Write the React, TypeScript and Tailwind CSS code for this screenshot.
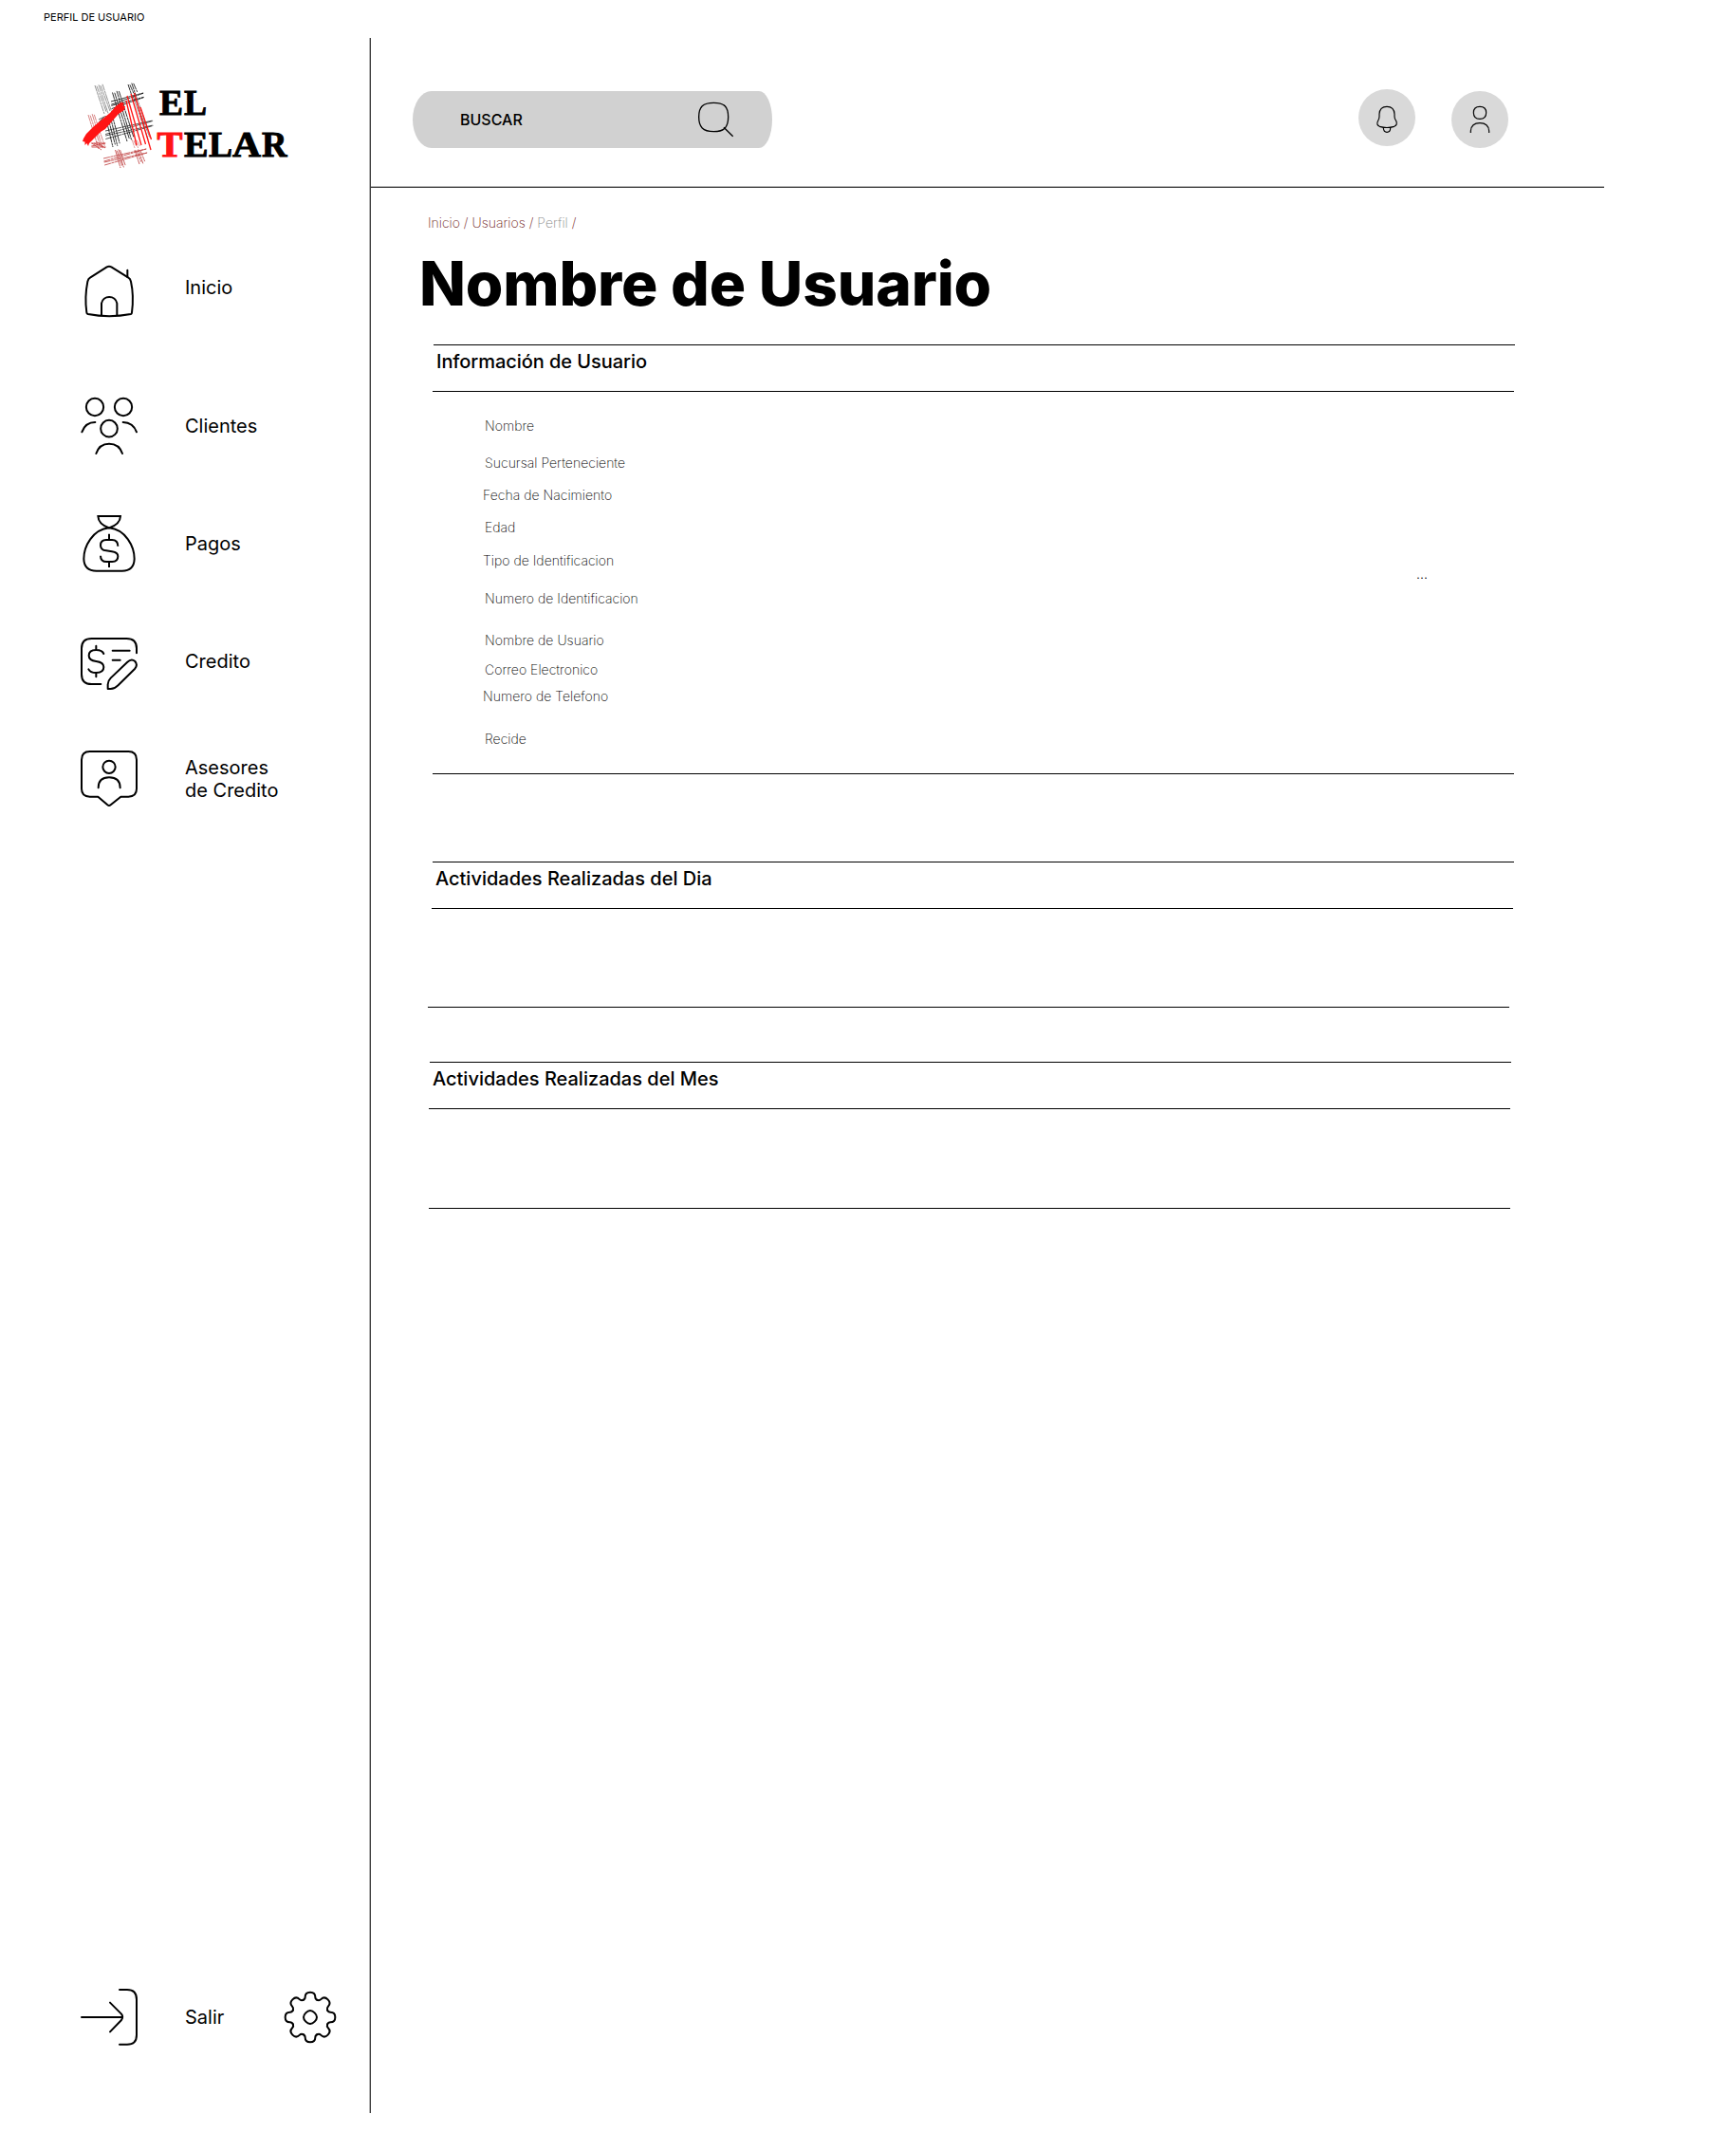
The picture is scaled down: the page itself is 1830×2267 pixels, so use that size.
import type { ReactNode } from "react";

const range = (n: number) => Array.from({ length: n }, (_, i) => i);

type BundleProps = {
  from: [number, number];
  to: [number, number];
  step: [number, number];
  count: number;
  color: string;
  width?: number;
};

/* A group of parallel threads of the woven logo. */
function Bundle({ from, to, step, count, color, width = 0.85 }: BundleProps) {
  return (
    <g stroke={color} strokeWidth={width} strokeDasharray="7 0.5 3 0.4">
      {range(count).map((i) => {
        const j = i % 2 === 0 ? 0 : 1;
        return (
          <line
            key={i}
            x1={from[0] + step[0] * i}
            y1={from[1] + step[1] * i + j}
            x2={to[0] + step[0] * i}
            y2={to[1] + step[1] * i - j * 2}
          />
        );
      })}
    </g>
  );
}

function Logo() {
  return (
    <svg className="ml-[80px] block h-[100px] w-[230px]" viewBox="80 80 230 100" fill="none">
      <Bundle from={[100, 90]} to={[110, 120]} step={[2, -0.3]} count={5} color="#666" width={0.7} />
      <Bundle from={[111, 122]} to={[119, 155]} step={[2.4, -0.6]} count={4} color="#111" />
      <Bundle from={[118.5, 97.5]} to={[134, 149]} step={[2.3, -0.8]} count={4} color="#111" />
      <Bundle from={[135, 89]} to={[139, 101]} step={[1.9, -0.7]} count={4} color="#111" />
      <Bundle from={[140, 101]} to={[156, 147]} step={[1.6, -0.4]} count={3} color="#777" />
      <Bundle from={[117, 107]} to={[151, 98]} step={[0.2, 2.2]} count={4} color="#111" />
      <Bundle from={[111, 138]} to={[161, 127]} step={[0.1, 2.5]} count={4} color="#111" width={0.7} />
      <Bundle from={[93, 121]} to={[104, 157]} step={[2.1, -0.4]} count={4} color="#d07070" />
      <Bundle from={[96, 151]} to={[111, 151]} step={[0.3, 2]} count={3} color="#c83c3c" />
      <Bundle from={[97, 151]} to={[107, 158]} step={[2, -1]} count={3} color="#c83c3c" />
      <Bundle from={[104, 126]} to={[110, 123]} step={[0.3, 1.7]} count={3} color="#444" />
      <Bundle from={[109, 167]} to={[154, 157]} step={[0.4, 2]} count={4} color="#c04646" />
      <Bundle from={[121.5, 158]} to={[127, 177]} step={[1.7, -0.3]} count={4} color="#c04646" />
      <Bundle from={[142, 158]} to={[147, 173]} step={[1.9, -0.3]} count={4} color="#c04646" />
      <Bundle from={[139, 147]} to={[142, 156]} step={[1.8, 0]} count={4} color="#d99090" />
      <g stroke="#ff1414" strokeWidth="1.3">
        <path d="M133 106L144 153M134 101L149 153M138 99L153.500 152M141.500 98L159 158M148 113L159.500 147" />
      </g>
      <path
        d="M128 107.500L131 109L129.500 111.500L132 112L131 116L125 120L118 128L111 136L106 139L99 146L94 151L93 154L91.500 151L89.500 153L89.500 149.500L87 149L88 146L91 141L98 134L105 128L111 123L116 119L122 112Z"
        fill="#ff1414"
      />
      <g
        fontFamily="'Liberation Serif', serif"
        fontWeight="700"
        fontSize="38"
        fill="#000"
        stroke="#000"
        strokeWidth="1"
      >
        <text x="168" y="120.500" textLength="25" lengthAdjust="spacingAndGlyphs">E</text>
        <text x="194" y="120.500" textLength="24" lengthAdjust="spacingAndGlyphs">L</text>
        <text x="165.500" y="164.500" textLength="27" lengthAdjust="spacingAndGlyphs" fill="#ff1414" stroke="#ff1414">T</text>
        <text x="194" y="164.500" textLength="25.500" lengthAdjust="spacingAndGlyphs">E</text>
        <text x="220" y="164.500" textLength="25" lengthAdjust="spacingAndGlyphs">L</text>
        <text x="245" y="164.500" textLength="30" lengthAdjust="spacingAndGlyphs">A</text>
        <text x="276" y="164.500" textLength="26.500" lengthAdjust="spacingAndGlyphs">R</text>
      </g>
    </svg>
  );
}

/* Outline icons are drawn on a grid three times finer than the page. */
const line = {
  fill: "none",
  stroke: "#000",
  strokeWidth: 6,
  strokeLinecap: "round",
  strokeLinejoin: "round",
} as const;

const HomeIcon = (
  <svg className="h-[60px] w-[62px] shrink-0" viewBox="72 51 186 180" {...line}>
    <path d="M165 62Q162 62 158 64L105 98Q99 101 97 110Q87 160 94 208Q94 212 98 213Q165 226 234 213Q237 212 237 208Q244 155 234 110Q232 101 226 98L172 64Q168 62 165 62Z" />
    <path d="M141 216V179a25 25 0 0 1 49 0V216M223 74V96" />
  </svg>
);

const ClientsIcon = (
  <svg className="h-[64px] w-[62px] shrink-0" viewBox="72 471 186 192" {...line}>
    <circle cx="120" cy="507" r="27.500" />
    <circle cx="210" cy="507" r="27.500" />
    <circle cx="165" cy="575" r="26.500" />
    <path d="M121 555Q90 555 79 586M209 555Q241 556 252 586M124 654Q134 623 165 623Q197 623 207 654" />
  </svg>
);

const MoneyBagIcon = (
  <svg className="h-[63px] w-[62px] shrink-0" viewBox="72 63 186 189" {...line} strokeLinecap="butt" strokeLinejoin="miter">
    <path d="M130 72H201C200 92 184 103 165 109C147 103 131 92 130 72Z" />
    <path d="M165 109C113 114 85 168 85 207Q86 245 125 245H206Q244 245 245 207C245 168 217 114 165 109Z" />
    <path d="M165 128V147M165 216V234M193 167Q193 147 174 147H156Q138 147 138 164Q138 179 156 181L174 184Q193 187 193 199Q193 216 175 216H157Q138 216 138 197" />
  </svg>
);

const CreditIcon = (
  <svg className="h-[57px] w-[62px] shrink-0" viewBox="72 453 186 171" {...line}>
    <path d="M252 505V490Q252 459 220 459H110Q78 459 78 490V572Q78 603 110 603H139" />
    <path d="M124 482V495M124 568V580M148 507Q143 495 124 495Q101 495 101 513Q101 528 124 531Q148 534 148 549Q148 567 124 567Q105 567 100 556M176 497H230M176 527H200" />
    <path d="M161 618V604Q161 593 170 584L223 533Q236 521 247 531Q257 543 246 555L192 608Q183 618 170 618Z" />
  </svg>
);

const AdvisorIcon = (
  <svg className="h-[61px] w-[62px] shrink-0" viewBox="72 810 186 183" {...line}>
    <path d="M104 816H226Q252 816 252 842V934Q252 959 226 959H202L170 985Q165 989 160 985L130 959H104Q78 959 78 934V842Q78 816 104 816Z" />
    <circle cx="165" cy="865" r="20" />
    <path d="M131 931Q131 898 165 898Q200 898 200 931" />
  </svg>
);

const ExitIcon = (
  <svg className="h-[62px] w-[62px] shrink-0" viewBox="72 75 186 186" {...line}>
    <path d="M198 81H222Q252 81 252 112V224Q252 254 222 254H198M78 168H206M168 122L204 158Q211 167 204 177L168 214" />
  </svg>
);

const GearIcon = (
  <svg className="h-[58px] w-[58px] shrink-0" viewBox="714 81 174 174" {...line}>
    {range(8).map((i) => (
      <path
        key={i}
        d="M778 114Q785 111 785 104Q785 89 801 89Q817 89 817 104Q817 111 824 114"
        transform={`rotate(${i * 45} 801 168)`}
      />
    ))}
    <path d="M801 147Q808 147 815 154Q822 161 822 168Q822 175 815 182Q808 189 801 189Q794 189 787 182Q780 175 780 168Q780 161 787 154Q794 147 801 147Z" />
  </svg>
);

type NavItemProps = { icon: ReactNode; label: ReactNode; row: string; text: string };

function NavItem({ icon, label, row, text }: NavItemProps) {
  return (
    <a className={`flex items-start pl-[84px] ${row}`}>
      {icon}
      <span className={`ml-[49px] text-[20px] leading-[24px] ${text}`}>{label}</span>
    </a>
  );
}

const fields: { label: string; row: string }[] = [
  { label: "Nombre", row: "h-[39px] pl-[55px]" },
  { label: "Sucursal Perteneciente", row: "h-[34px] pl-[55px]" },
  { label: "Fecha de Nacimiento", row: "h-[34px] pl-[53px]" },
  { label: "Edad", row: "h-[35px] pl-[55px]" },
  { label: "Tipo de Identificacion", row: "h-[40px] pl-[53px]" },
  { label: "Numero de Identificacion", row: "h-[44px] pl-[55px]" },
  { label: "Nombre de Usuario", row: "h-[31px] pl-[55px]" },
  { label: "Correo Electronico", row: "h-[28px] pl-[55px]" },
  { label: "Numero de Telefono", row: "h-[45px] pl-[53px]" },
  { label: "Recide", row: "h-[17px] pl-[55px]" },
];

type SectionProps = {
  title: string;
  heading?: string;
  className: string;
  body: string;
  end: string;
  children?: ReactNode;
};

function Section({ title, heading = "", className, body, end, children }: SectionProps) {
  return (
    <section className={`w-[1140px] ${className}`}>
      <h2
        className={`ml-px h-[49px] w-[1140px] border-t border-black pt-[5px] pl-[3px] text-[20px] leading-[24px] font-medium ${heading}`}
      >
        {title}
      </h2>
      <div className={`border-t border-black ${body}`}>{children}</div>
      <div className={`h-px w-[1140px] bg-black ${end}`} />
    </section>
  );
}

export default function App() {
  return (
    <div className="h-[2267px] w-[1830px] overflow-hidden bg-white font-['Inter',sans-serif] text-black">
      <div className="h-[40px] pt-[11px] pl-[46px] text-[11px] leading-[14px]">PERFIL DE USUARIO</div>
      <div className="flex h-[2187px]">
        <aside className="flex w-[390px] shrink-0 flex-col border-r border-[#b5b5b5] pt-[40px]">
          <Logo />
          <nav className="flex flex-col">
            <NavItem icon={HomeIcon} label="Inicio" row="mt-[97px] h-[60px]" text="pt-[14px]" />
            <NavItem icon={ClientsIcon} label="Clientes" row="mt-[80px] h-[64px]" text="pt-[20px]" />
            <NavItem icon={MoneyBagIcon} label="Pagos" row="mt-[60px] h-[63px]" text="pt-[20px]" />
            <NavItem icon={CreditIcon} label="Credito" row="mt-[67px] h-[57px]" text="pt-[14px]" />
            <NavItem
              icon={AdvisorIcon}
              label={<>Asesores<br />de Credito</>}
              row="mt-[62px] h-[61px]"
              text="pt-[7px]"
            />
          </nav>
          <div className="mt-auto mb-[70px] flex items-start">
            <NavItem icon={ExitIcon} label="Salir" row="h-[62px] w-[298px]" text="pt-[19px]" />
            <div className="pt-[2px]">{GearIcon}</div>
          </div>
        </aside>

        <main className="w-[1301px] border-l border-[#3a3a3a]">
          <header className="flex h-[157px] items-start border-b border-[#b5b5b5] pl-[44px]">
            <div className="mt-[56px] flex h-[60px] w-[379px] items-start bg-[#d1d1d1] [border-radius:20px_14px_14px_20px/30px]">
              <span className="mt-[20px] ml-[50px] w-[249px] text-[16px] leading-[20px] font-medium">BUSCAR</span>
              <svg className="mt-[10px] h-[40px] w-[40px]" viewBox="1061 138 120 120" {...line} strokeWidth="4" strokeLinecap="butt">
                <path d="M1116 145C1150 145 1162 158 1162 190C1162 222 1150 236 1116 236C1082 236 1069 222 1069 190C1069 158 1082 145 1116 145ZM1148 223L1177 251" />
              </svg>
            </div>
            <div className="mt-[54px] ml-[618px] h-[60px] w-[60px] rounded-full bg-[#d9d9d9]">
              <svg className="h-[60px] w-[60px]" viewBox="96 102 180 180" {...line} strokeWidth="3.500">
                <path d="M186 157Q163 157 162 181V188Q162 195 158 202Q151 215 163 220Q186 227 209 220Q221 215 215 202Q210 195 210 188V181Q209 157 186 157ZM175 225Q176 238 186 238Q197 238 197 225" />
              </svg>
            </div>
            <div className="mt-[56px] ml-[38px] h-[60px] w-[60px] rounded-full bg-[#d9d9d9]">
              <svg className="h-[60px] w-[60px]" viewBox="390 108 180 180" {...line} strokeWidth="3.500" strokeLinecap="butt">
                <path d="M480 157Q500 157 500 176Q500 196 480 196Q460 196 460 176Q460 157 480 157ZM451 240V234Q453 209 480 209Q507 209 509 234V240" />
              </svg>
            </div>
          </header>

          <div className="border-t border-[#3a3a3a] pt-[28px]">
            <div className="h-[17px] pl-[60px] text-[14px] leading-[17px] font-[250] whitespace-pre text-[#6b0f0f]">
              Inicio / Usuarios / <span className="text-[#8a8a8a]">Perfil</span> /
            </div>
            <h1 className="mt-[17px] h-[103px] pl-[51px] text-[64px] leading-[78px] font-extrabold tracking-[-0.17px] whitespace-nowrap">
              Nombre de Usuario
            </h1>

            <div className="flex">
              <Section
                title="Información de Usuario"
                heading="tracking-[-0.06px]"
                className="ml-[65px]"
                body="h-[403px] pt-[27px]"
                end="ml-0"
              >
                <div className="flex">
                  <dl className="w-[1037px] text-[14px] leading-[17px] font-[250] tracking-[0.02px] text-black">
                    {fields.map((f) => (
                      <dt key={f.label} className={f.row}>{f.label}</dt>
                    ))}
                  </dl>
                  <span className="mt-[156px] text-[14px] leading-[17px] font-light">...</span>
                </div>
              </Section>
            </div>
            <Section title="Actividades Realizadas del Dia" className="mt-[92px] ml-[64px]" body="h-[104px]" end="-ml-[4px]" />
            <Section title="Actividades Realizadas del Mes" className="mt-[57px] ml-[61px]" body="h-[105px]" end="ml-0" />
          </div>
        </main>
      </div>
    </div>
  );
}
